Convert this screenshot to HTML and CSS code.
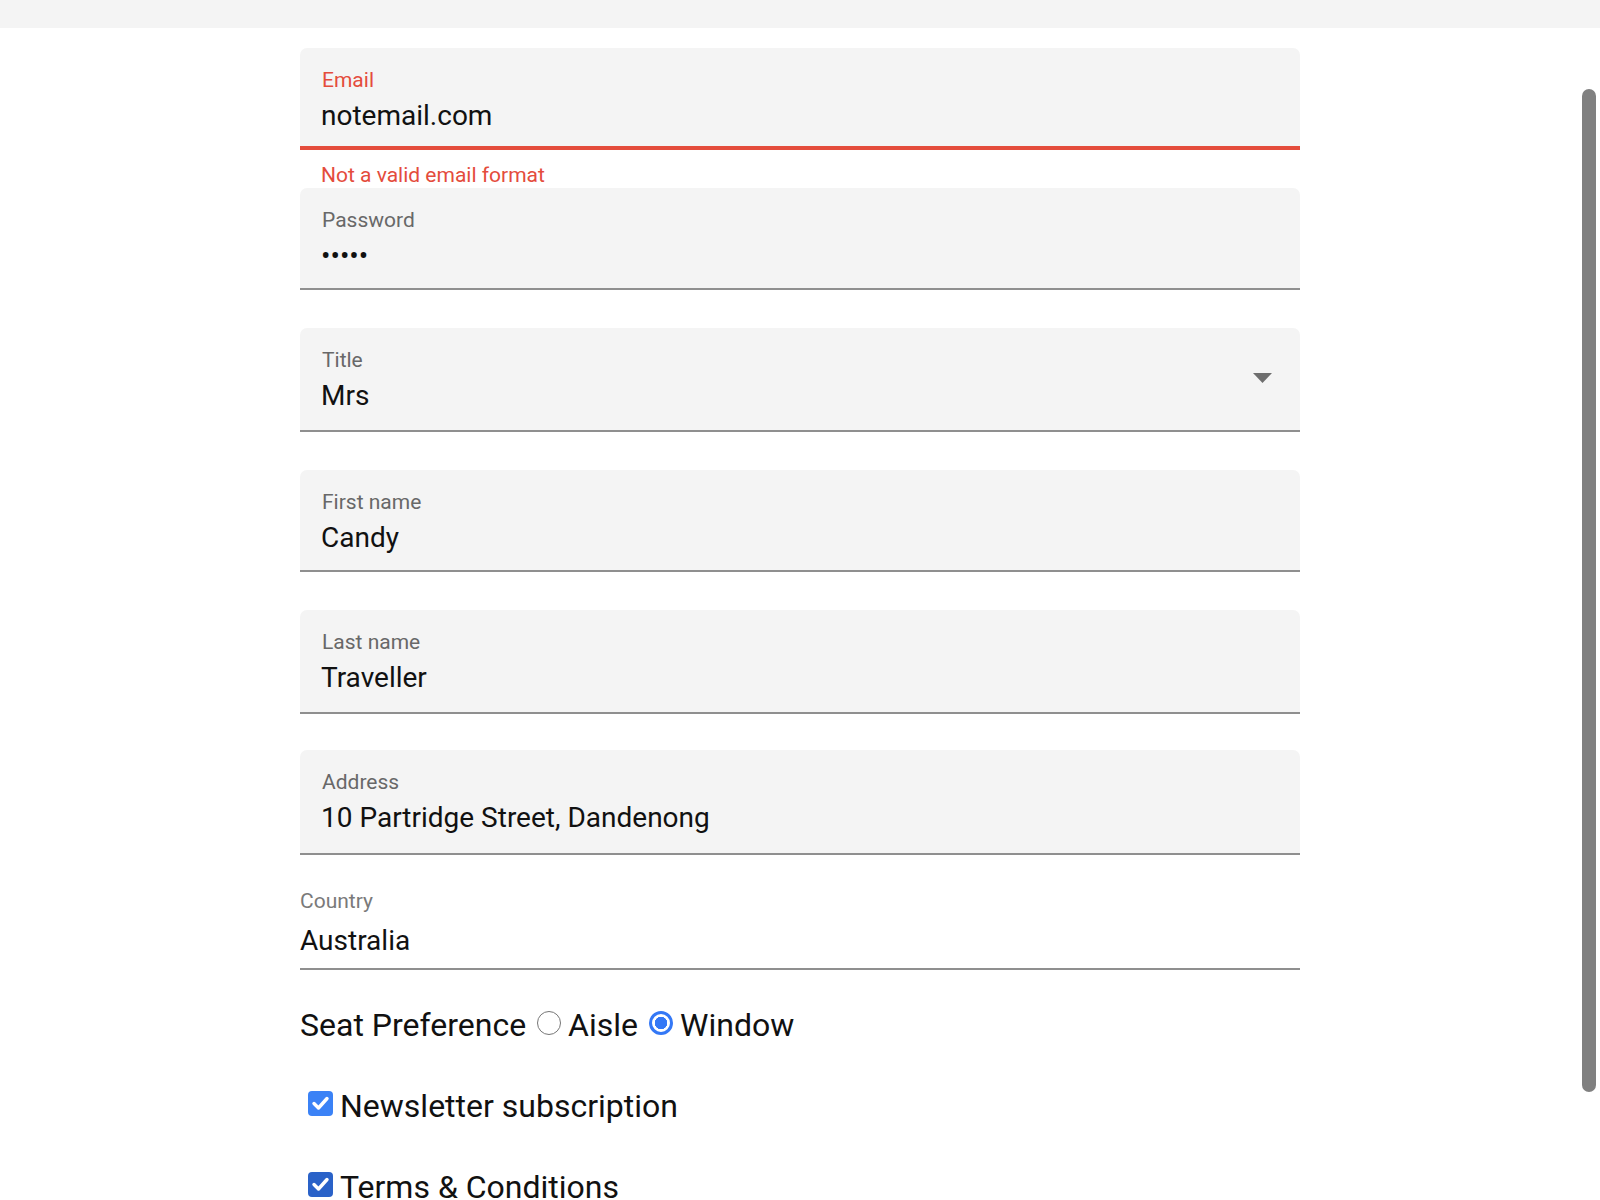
FILE: index.html
```html
<!DOCTYPE html>
<html lang="en">
<head>
<meta charset="utf-8">
<title>Booking form</title>
<link rel="stylesheet" href="styles.css">
</head>
<body>
<div class="topbar"></div>
<main class="form">
  <div class="row">
    <div class="field field--error">
      <div class="field-body">
        <span class="label label--error">Email</span>
        <span class="value">notemail.com</span>
      </div>
    </div>
    <div class="helper">Not a valid email format</div>
  </div>
  <div class="row">
    <div class="field">
      <div class="field-body">
        <span class="label">Password</span>
        <span class="value">•••••</span>
      </div>
    </div>
  </div>
  <div class="row row--select">
    <div class="field field--select">
      <div class="field-body">
        <span class="label">Title</span>
        <span class="value">Mrs</span>
      </div>
      <svg class="caret" width="19" height="10" viewBox="0 0 19 10"><path d="M0 0 H19 L9.5 10 Z" fill="#6e6e6e"/></svg>
    </div>
  </div>
  <div class="row">
    <div class="field">
      <div class="field-body">
        <span class="label">First name</span>
        <span class="value">Candy</span>
      </div>
    </div>
  </div>
  <div class="row">
    <div class="field field--tall">
      <div class="field-body">
        <span class="label">Last name</span>
        <span class="value">Traveller</span>
      </div>
    </div>
  </div>
  <div class="row">
    <div class="field field--taller">
      <div class="field-body">
        <span class="label">Address</span>
        <span class="value">10 Partridge Street, Dandenong</span>
      </div>
    </div>
  </div>
  <div class="country">
    <div class="country-label">Country</div>
    <div class="country-value">Australia</div>
  </div>
  <div class="seat">
    <span>Seat Preference</span>
    <span class="radio"></span>
    <span>Aisle</span>
    <span class="radio radio--on"></span>
    <span>Window</span>
  </div>
  <div class="check">
    <span class="box"><svg width="25" height="25" viewBox="0 0 25 25"><path d="M6 12.5 L10.5 17 L19 7.5" fill="none" stroke="#fff" stroke-width="3.4" stroke-linecap="round" stroke-linejoin="round"/></svg></span>
    <span>Newsletter subscription</span>
  </div>
  <div class="check">
    <span class="box box--dark"><svg width="25" height="25" viewBox="0 0 25 25"><path d="M6 12.5 L10.5 17 L19 7.5" fill="none" stroke="#fff" stroke-width="3.4" stroke-linecap="round" stroke-linejoin="round"/></svg></span>
    <span>Terms &amp; Conditions</span>
  </div>
</main>
<div class="scroll-thumb"></div>
</body>
</html>
```
FILE: styles.css
```css
html, body {
  margin: 0;
  padding: 0;
}
body {
  font-family: Roboto, "Noto Sans", Arial, sans-serif;
  background: #ffffff;
  color: #111111;
  height: 1200px;
  overflow: hidden;
  position: relative;
}
.topbar {
  height: 28px;
  background: #f4f4f4;
}
.form {
  width: 1000px;
  margin-left: 300px;
  padding-top: 20px;
}
.row {
  height: 140px;
}
.row--select {
  height: 142px;
}
.field {
  box-sizing: border-box;
  height: 102px;
  background: #f4f4f4;
  border-radius: 7px 7px 0 0;
  border-bottom: 2px solid #8f8f8f;
  padding: 20px 22px 0 21px;
  display: flex;
  align-items: flex-start;
}
.field--error {
  border-bottom: 4px solid #e44c3c;
}
.field--select {
  height: 104px;
}
.field--tall {
  height: 104px;
}
.field--taller {
  height: 105px;
}
.field-body {
  flex: 1;
  display: flex;
  flex-direction: column;
}
.label {
  font-size: 21px;
  line-height: 24px;
  color: #686868;
  padding-left: 1px;
}
.label--error {
  color: #e44c3c;
}
.value {
  font-size: 28px;
  line-height: 34px;
  margin-top: 6.5px;
  color: #111111;
}
.caret {
  margin-top: 25px;
  margin-right: 6px;
}
.helper {
  padding: 13px 22px 0 21px;
  font-size: 21px;
  line-height: 24px;
  color: #e44c3c;
}
.country {
  border-bottom: 2px solid #8f8f8f;
  padding-top: 1px;
  padding-bottom: 10px;
}
.country-label {
  font-size: 21px;
  line-height: 20px;
  color: #7a7a7a;
}
.country-value {
  font-size: 28px;
  line-height: 34px;
  margin-top: 13px;
  color: #111111;
}
.seat {
  margin-top: 37px;
  display: flex;
  align-items: center;
  font-size: 32px;
  line-height: 36px;
  color: #111111;
}
.radio {
  box-sizing: border-box;
  width: 24px;
  height: 24px;
  border-radius: 50%;
  border: 1.5px solid #767676;
  background: #ffffff;
  margin: 0 7px 4px 11px;
}
.radio--on {
  border: 3px solid #3478f6;
  background: radial-gradient(circle, #3478f6 0 6px, #ffffff 6.5px);
  margin-left: 11px;
  margin-right: 7px;
}
.check {
  margin-top: 45px;
  display: flex;
  align-items: center;
  font-size: 32px;
  line-height: 36px;
  color: #111111;
}
.box {
  width: 25px;
  height: 25px;
  border-radius: 4px;
  background: #3b82f6;
  margin: 0 7px 5px 8px;
  display: flex;
}
.box--dark {
  background: #2a62c8;
}
.scroll-thumb {
  position: absolute;
  left: 1582px;
  top: 89px;
  width: 14px;
  height: 1003px;
  border-radius: 7px;
  background: #808080;
}
```
